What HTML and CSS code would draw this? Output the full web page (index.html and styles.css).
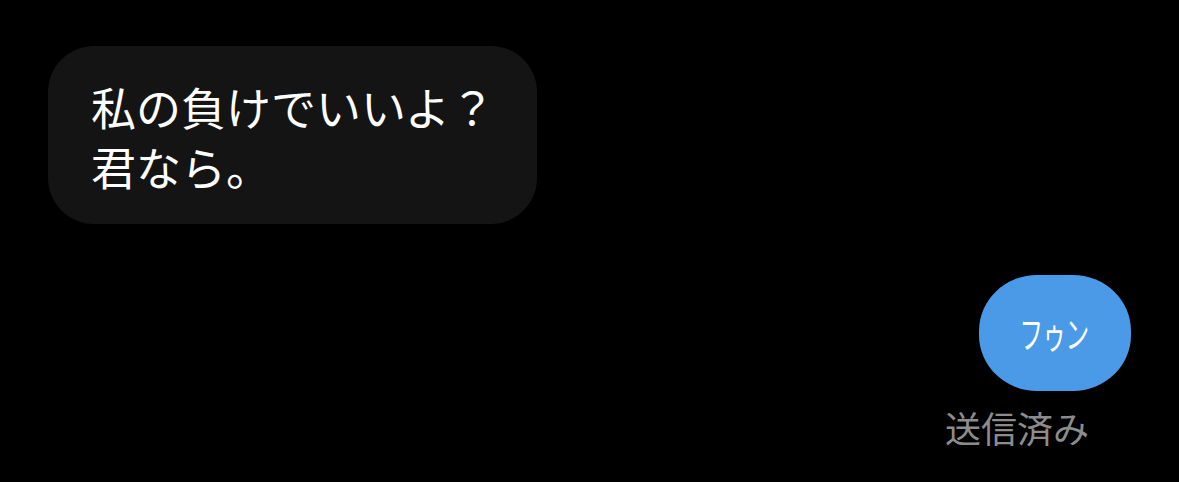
FILE: index.html
```html
<!DOCTYPE html>
<html lang="ja">
<head>
<meta charset="utf-8">
<link rel="stylesheet" href="styles.css">
</head>
<body>
<div class="chat">
  <div class="row row-in">
    <div class="bubble bubble-in">私の負けでいいよ？<br>君なら。</div>
  </div>
  <div class="row row-out">
    <div class="bubble bubble-out"><span class="cond">フゥン</span></div>
    <div class="status">送信済み</div>
  </div>
</div>
</body>
</html>
```

FILE: styles.css
```css
html, body {
  margin: 0;
  padding: 0;
  background: #000;
  width: 1179px;
  height: 482px;
  overflow: hidden;
}
.chat {
  display: flex;
  flex-direction: column;
  padding: 46px 48px 0 48px;
  font-family: "Noto Sans CJK JP", "Noto Sans", sans-serif;
}
.row {
  display: flex;
  flex-direction: column;
}
.row-in {
  align-items: flex-start;
}
.row-out {
  align-items: flex-end;
  margin-top: 51px;
}
.bubble {
  box-sizing: border-box;
}
.bubble-in {
  background: #141414;
  color: #fff;
  font-size: 45px;
  line-height: 60px;
  padding: 31px 40px 25px 43px;
  border-radius: 46px;
  width: 489px;
  height: 178px;
}
.bubble-out {
  background: #4a9ae8;
  color: #fff;
  width: 152px;
  height: 116px;
  border-radius: 58px / 56px;
  display: flex;
  align-items: center;
  justify-content: center;
}
.cond {
  display: inline-block;
  font-size: 37px;
  line-height: 1;
  transform: scaleX(0.64);
  letter-spacing: -1px;
  margin-left: -2px;
}
.status {
  color: #8c8c8c;
  font-size: 36px;
  line-height: 40px;
  margin-top: 16px;
  margin-right: 42px;
}
```
